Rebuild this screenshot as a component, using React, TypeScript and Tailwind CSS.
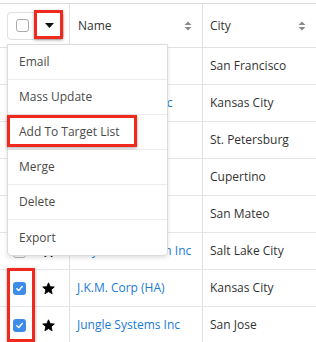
import React from "react";

type Row = {
  name: string;
  city: string;
  checked?: boolean;
  fav?: boolean;
};

// names of rows 1, 3, 4, 5 sit fully under the open menu
const rows: Row[] = [
  { name: "", city: "San Francisco" },
  { name: "Max Holdings Inc", city: "Kansas City" },
  { name: "", city: "St. Petersburg" },
  { name: "", city: "Cupertino" },
  { name: "", city: "San Mateo" },
  { name: "Rhyme & Reason Inc", city: "Salt Lake City", fav: true },
  { name: "J.K.M. Corp (HA)", city: "Kansas City", checked: true, fav: true },
  { name: "Jungle Systems Inc", city: "San Jose", checked: true, fav: true },
];

const actions = ["Email", "Mass Update", "Add To Target List", "Merge", "Delete", "Export"];

function SortIcon() {
  return (
    <svg width="8" height="10" viewBox="0 0 8 10" className="shrink-0">
      <path d="M4 0.5 L7.5 4 H0.5 Z" fill="#8a8a8a" />
      <path d="M4 9.5 L7.5 6 H0.5 Z" fill="#8a8a8a" />
    </svg>
  );
}

function Star({ filled }: { filled?: boolean }) {
  return (
    <svg width="13" height="13" viewBox="0 0 24 24">
      <path
        d="M12 1.5l3.1 7.1 7.6.6-5.8 5 1.8 7.5L12 17.7l-6.7 4 1.8-7.5-5.8-5 7.6-.6z"
        fill={filled ? "#000" : "none"}
        stroke="#000"
        strokeWidth="1.6"
        strokeLinejoin="round"
      />
    </svg>
  );
}

function Checkbox({ checked }: { checked?: boolean }) {
  if (checked) {
    return (
      <span className="flex h-[13px] w-[13px] items-center justify-center rounded-[3px] bg-[#3d8de8]">
        <svg width="9" height="9" viewBox="0 0 10 10">
          <path d="M2 5.2 L4.2 7.3 L8 2.8" fill="none" stroke="#fff" strokeWidth="1.6" strokeLinecap="round" strokeLinejoin="round" />
        </svg>
      </span>
    );
  }
  return <span className="block h-[13px] w-[13px] rounded-[3px] border border-[#b5b5b5] bg-white" />;
}

export default function App() {
  return (
    <div
      className="relative h-[342px] w-[316px] overflow-hidden bg-white text-[12px] text-[#333]"
      style={{ fontFamily: '"Open Sans", "Liberation Sans", sans-serif' }}
    >
      {/* Table */}
      <div className="mt-[3px] border-t border-[#dcdcdc]">
        {/* Header */}
        <div className="flex h-[44px] border-b border-[#e2e2e2]">
          <div className="flex w-[70px] items-center border-r border-[#e2e2e2] pl-[7px]">
            <div className="flex h-[28px] w-[57px] items-center rounded-[4px] border border-[#e0e0e0]">
              <div className="flex w-[27px] items-center justify-center pl-[1px]">
                <span className="block h-[13px] w-[13px] rounded-[3px] border border-[#aaa] bg-white" />
              </div>
              <div className="flex flex-1 items-center justify-center">
                <svg width="9" height="5" viewBox="0 0 9 5">
                  <path d="M0 0 H9 L4.5 5 Z" fill="#111" />
                </svg>
              </div>
            </div>
          </div>
          <div className="flex w-[133px] items-center justify-between border-r border-[#e2e2e2] pl-[8px] pr-[10px]">
            <span>Name</span>
            <SortIcon />
          </div>
          <div className="flex flex-1 items-center justify-between pl-[7px] pr-[10px]">
            <span>City</span>
            <SortIcon />
          </div>
        </div>

        {/* Rows */}
        {rows.map((r, i) => (
          <div key={i} className="flex h-[37px] border-b border-[#e6e6e6]">
            <div className="flex w-[70px] items-center border-r border-[#e2e2e2] pl-[13px]">
              <Checkbox checked={r.checked} />
              <span className="ml-[16px] flex">
                <Star filled={r.fav} />
              </span>
            </div>
            <div className="flex w-[133px] items-center whitespace-nowrap border-r border-[#e2e2e2] pl-[7px] text-[#1a7bd4]">
              {r.name}
            </div>
            <div className="flex flex-1 items-center whitespace-nowrap pl-[7px]">{r.city}</div>
          </div>
        ))}
      </div>

      {/* Actions dropdown */}
      <div className="absolute left-[7px] top-[44px] w-[161px] rounded-b-[4px] border border-[#dcdcdc] bg-white shadow-[0_2px_4px_rgba(0,0,0,0.12)]">
        {actions.map((a, i) => (
          <div
            key={a}
            className={`flex h-[35px] items-center pl-[11px] text-[#4a4a4a] ${i < actions.length - 1 ? "border-b border-[#ececec]" : ""}`}
          >
            {a}
          </div>
        ))}
      </div>

      {/* Annotation boxes */}
      <div className="absolute left-[34px] top-[10px] h-[29px] w-[29px] border-[3px] border-[#f0291f] shadow-[0_1px_3px_rgba(0,0,0,0.35)]" />
      <div className="absolute left-[7px] top-[115px] h-[32px] w-[130px] border-[3px] border-[#f0291f] shadow-[0_1px_3px_rgba(0,0,0,0.35)]" />
      <div className="absolute left-[7px] top-[268px] h-[74px] w-[28px] border-[3px] border-[#f0291f] shadow-[0_1px_3px_rgba(0,0,0,0.35)]" />
    </div>
  );
}
